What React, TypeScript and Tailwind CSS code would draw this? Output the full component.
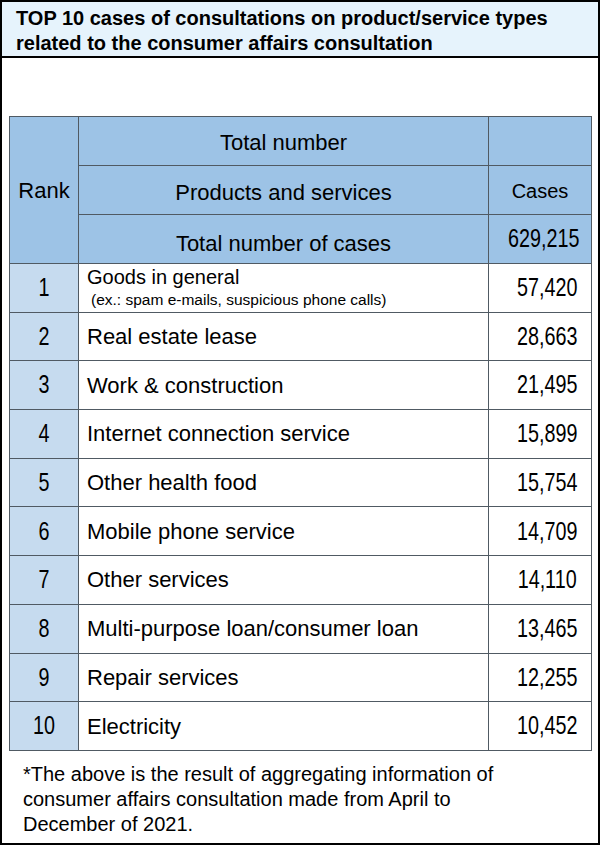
import React from 'react';

interface Row {
  rank: number;
  name: string;
  note?: string;
  cases: string;
}

const ROWS: Row[] = [
  { rank: 1, name: 'Goods in general', note: '(ex.: spam e-mails, suspicious phone calls)', cases: '57,420' },
  { rank: 2, name: 'Real estate lease', cases: '28,663' },
  { rank: 3, name: 'Work & construction', cases: '21,495' },
  { rank: 4, name: 'Internet connection service', cases: '15,899' },
  { rank: 5, name: 'Other health food', cases: '15,754' },
  { rank: 6, name: 'Mobile phone service', cases: '14,709' },
  { rank: 7, name: 'Other services', cases: '14,110' },
  { rank: 8, name: 'Multi-purpose loan/consumer loan', cases: '13,465' },
  { rank: 9, name: 'Repair services', cases: '12,255' },
  { rank: 10, name: 'Electricity', cases: '10,452' },
];

const SANS = "font-['Liberation_Sans',Arial,sans-serif]";
const CELL = 'border border-[#505a63]';

// condensed digits: no narrow font installed, so squeeze the regular one
const Num: React.FC<{ value: string | number; origin?: 'right' | 'center' }> = ({ value, origin = 'right' }) => (
  <span
    className={`inline-block text-[25px] scale-x-[0.79] ${origin === 'right' ? 'origin-right' : 'origin-center'}`}
  >
    {value}
  </span>
);

export default function App() {
  return (
    <div className={`w-[600px] h-[845px] border-2 border-black bg-white text-black ${SANS} flex flex-col`}>
      {/* Title band */}
      <div className="h-[56px] shrink-0 bg-[#e6f3fc] border-b-2 border-black pl-[14px] pt-[4px]">
        <h1 className="text-[20px] font-bold leading-[25px]">
          TOP 10 cases of consultations on product/service types
          <br />
          related to the consumer affairs consultation
        </h1>
      </div>

      {/* Table */}
      <div className="px-[7px] pt-[58px]">
        <table className="w-[582px] border-collapse table-fixed border border-[#6b6b6b]">
          <colgroup>
            <col className="w-[69px]" />
            <col className="w-[410px]" />
            <col className="w-[103px]" />
          </colgroup>
          <thead>
            <tr className="h-[49px] bg-[#9dc3e6]">
              <th rowSpan={3} className={`${CELL} text-[22px] font-normal`}>
                Rank
              </th>
              <th className={`${CELL} text-[22px] font-normal pt-[3px]`}>Total number</th>
              <th className={CELL} />
            </tr>
            <tr className="h-[49px] bg-[#9dc3e6]">
              <th className={`${CELL} text-[22px] font-normal pt-[4px]`}>Products and services</th>
              <th className={`${CELL} text-[20px] font-normal pt-[2px]`}>Cases</th>
            </tr>
            <tr className="h-[49px] bg-[#9dc3e6]">
              <th className={`${CELL} text-[22px] font-normal pt-[8px]`}>Total number of cases</th>
              <th className={`${CELL} font-normal text-right pr-[14px]`}>
                <Num value="629,215" />
              </th>
            </tr>
          </thead>
          <tbody>
            {ROWS.map((row) => (
              <tr key={row.rank} className="h-[48.7px]">
                <td className={`${CELL} bg-[#c6dbef] text-center`}>
                  <Num value={row.rank} origin="center" />
                </td>
                <td className={`${CELL} pl-[8px]`}>
                  {row.note ? (
                    <div className="flex flex-col">
                      <span className="text-[20px] leading-[24px]">{row.name}</span>
                      <span className="text-[15.5px] leading-[22px] pl-[4px]">{row.note}</span>
                    </div>
                  ) : (
                    <span className="text-[22px]">{row.name}</span>
                  )}
                </td>
                <td className={`${CELL} text-right pr-[14px]`}>
                  <Num value={row.cases} />
                </td>
              </tr>
            ))}
          </tbody>
        </table>
      </div>

      {/* Footnote */}
      <p className="pl-[21px] pt-[11px] text-[20px] leading-[25px]">
        *The above is the result of aggregating information of
        <br />
        consumer affairs consultation made from April to
        <br />
        December of 2021.
      </p>
    </div>
  );
}
